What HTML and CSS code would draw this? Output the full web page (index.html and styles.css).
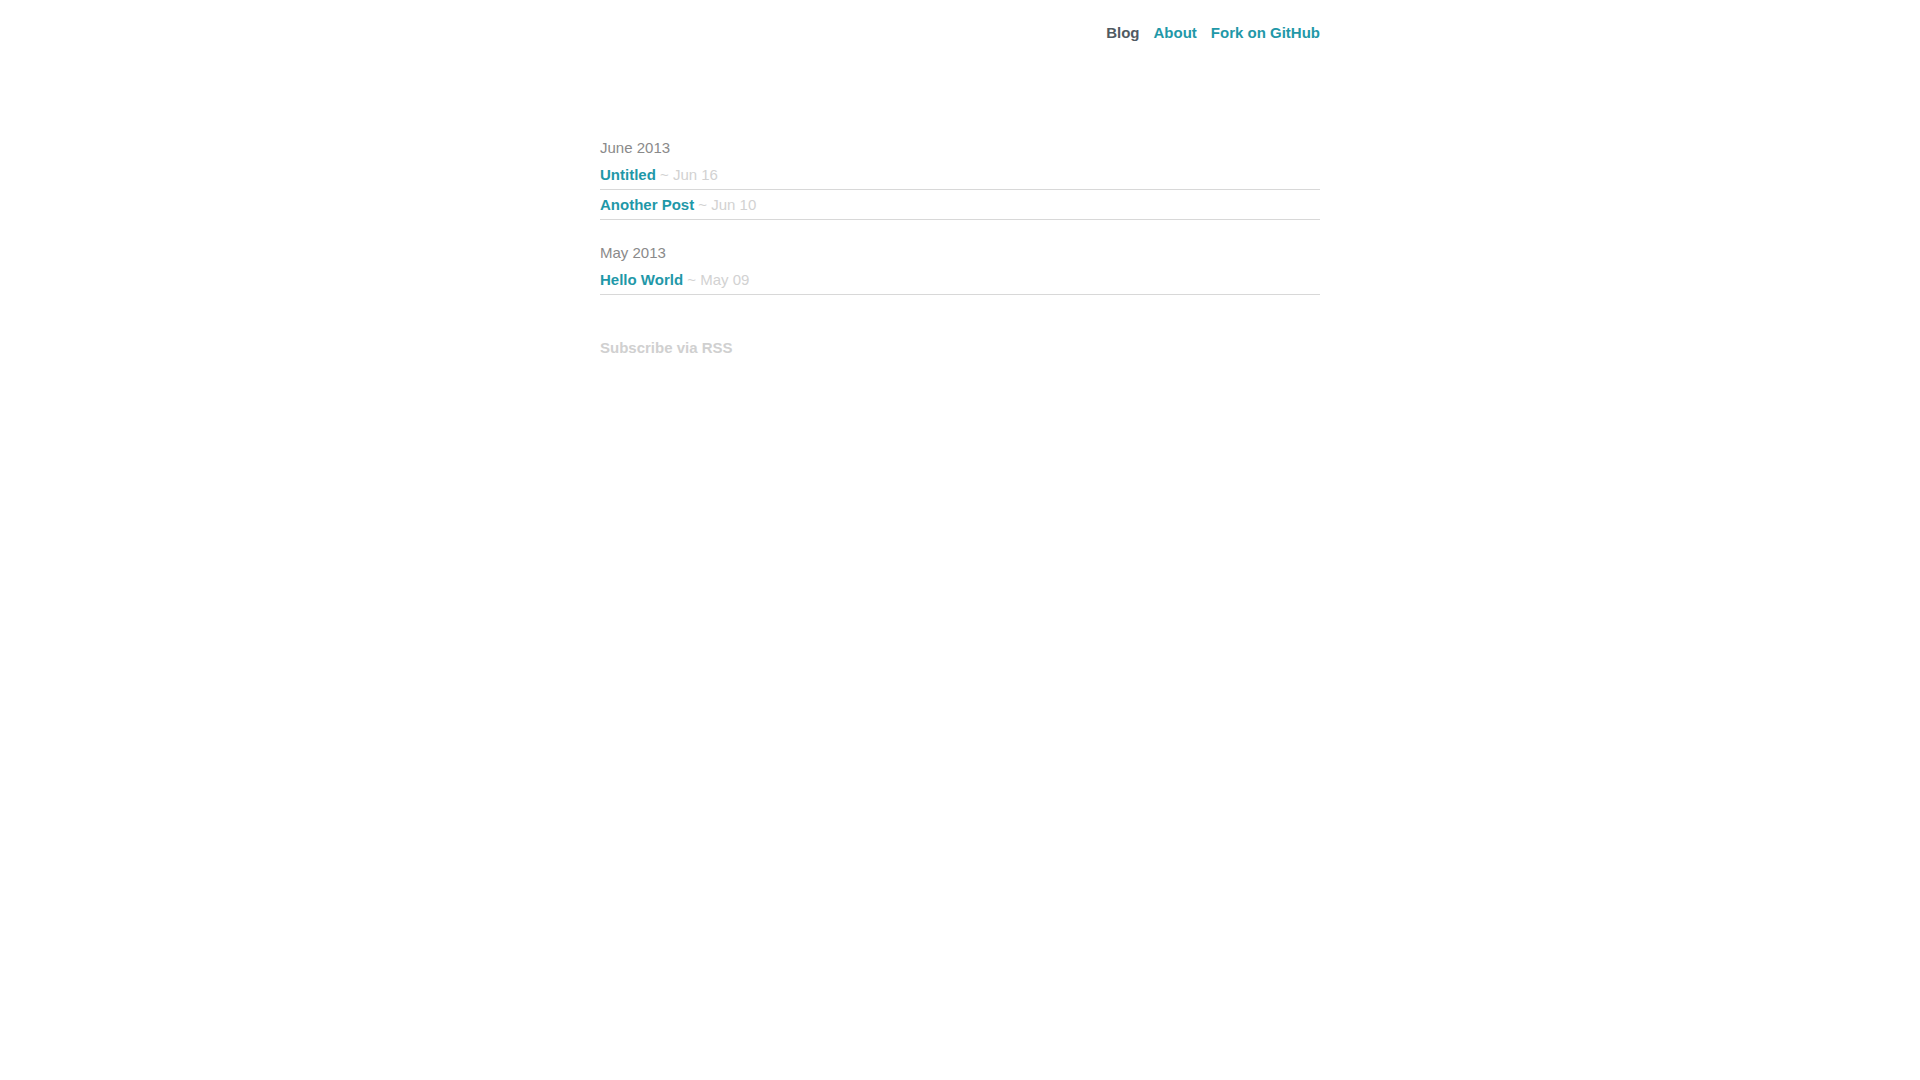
FILE: index.html
```html
<!DOCTYPE html>
<html>
<head>
<meta charset="utf-8">
<title>Blog</title>
<link rel="stylesheet" href="styles.css">
</head>
<body>
<div class="wrap">
  <header class="site-header">
    <nav class="nav">
      <a class="nav-link current" href="#">Blog</a>
      <a class="nav-link" href="#">About</a>
      <a class="nav-link" href="#">Fork on GitHub</a>
    </nav>
  </header>
  <main class="archive">
    <section class="month">
      <h2 class="month-title">June 2013</h2>
      <ul class="posts">
        <li class="post"><a class="post-link" href="#">Untitled</a> <span class="post-date">~ Jun 16</span></li>
        <li class="post"><a class="post-link" href="#">Another Post</a> <span class="post-date">~ Jun 10</span></li>
      </ul>
    </section>
    <section class="month">
      <h2 class="month-title">May 2013</h2>
      <ul class="posts">
        <li class="post"><a class="post-link" href="#">Hello World</a> <span class="post-date">~ May 09</span></li>
      </ul>
    </section>
    <a class="rss" href="#">Subscribe via RSS</a>
  </main>
</div>
</body>
</html>
```

FILE: styles.css
```css
html, body {
  margin: 0;
  padding: 0;
  background: #ffffff;
}
body {
  font-family: "Liberation Sans", Arial, Helvetica, sans-serif;
  font-size: 15px;
  line-height: 20px;
  color: #8a8a8a;
}
a {
  text-decoration: none;
}
.wrap {
  width: 720px;
  margin: 0 auto;
}
.site-header {
  padding-top: 23px;
  display: flex;
  justify-content: flex-end;
}
.nav {
  display: flex;
  gap: 14px;
}
.nav-link {
  font-weight: bold;
  color: #1f98a8;
}
.nav-link.current {
  color: #505a62;
}
.archive {
  margin-top: 94px;
}
.month + .month {
  margin-top: 22px;
}
.month-title {
  margin: 0 0 2px 0;
  padding-top: 1px;
  font-size: 15px;
  font-weight: normal;
  line-height: 20px;
  color: #8a8a8a;
}
.posts {
  list-style: none;
  margin: 0;
  padding: 0;
}
.post {
  padding: 5px 0 4px 0;
  border-bottom: 1px solid #d8d8d8;
}
.post-link {
  font-weight: bold;
  color: #1f98a8;
}
.post-date {
  color: #d2d2d2;
}
.rss {
  display: inline-block;
  margin-top: 43px;
  font-weight: bold;
  color: #d0d0d0;
}
```
